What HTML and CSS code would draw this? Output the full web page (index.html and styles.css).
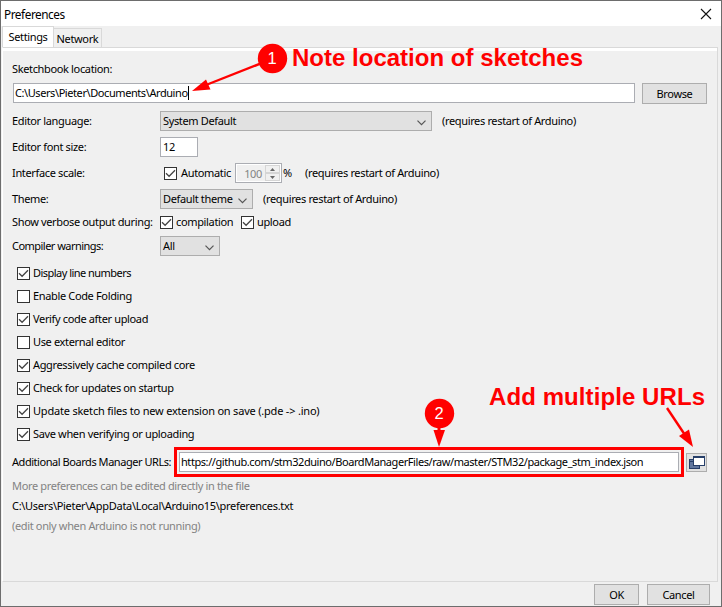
FILE: index.html
```
<!DOCTYPE html>
<html lang="en">
<head>
<meta charset="utf-8">
<title>Preferences</title>
<link rel="stylesheet" href="styles.css">
</head>
<body>
<svg class="defs" width="0" height="0">
  <symbol id="tick" viewBox="0 0 11 11"><path d="M1 5.2 4.1 8.3 10 2.3" fill="none" stroke="#444" stroke-width="1.25"/></symbol>
  <symbol id="chevron" viewBox="0 0 9 6"><path d="M.5.7 4.5 4.7 8.5.7" fill="none" stroke="#555" stroke-width="1.2"/></symbol>
</svg>
<div class="window">
  <header class="titlebar"><span class="title">Preferences</span>
    <svg class="close" width="12" height="12" viewBox="0 0 12 12"><path d="M1 1 11 11M11 1 1 11" stroke="#111" stroke-width="1.1"/></svg>
  </header>
  <nav class="tabs"><span class="tab active"><span class="t">Settings</span></span><span class="tab network"><span class="t">Network</span></span></nav>
  <main class="panel">
    <div class="row heading"><span class="t">Sketchbook location:</span></div>
    <div class="row location"><div class="field path"><span class="t w-path">C:\Users\Pieter\Documents\Arduino</span><i class="caret"></i></div><button class="browse"><span class="t">Browse</span></button></div>
    <div class="row language"><label><span class="t">Editor language:</span></label><div class="combo wide"><span class="t">System Default</span><svg width="9" height="6"><use href="#chevron"/></svg></div><span class="t note">(requires restart of Arduino)</span></div>
    <div class="row fontsize"><label><span class="t">Editor font size:</span></label><div class="field size"><span class="t">12</span></div></div>
    <div class="row scale"><label><span class="t">Interface scale:</span></label><i class="check auto"><svg width="11" height="11"><use href="#tick"/></svg></i><span class="t automatic">Automatic</span>
      <div class="spinner"><span class="t value">100</span><div class="steps"><i><svg width="5" height="3"><path d="M0 3 2.5 0 5 3z" fill="#666"/></svg></i><i><svg width="5" height="3"><path d="M0 0 2.5 3 5 0z" fill="#666"/></svg></i></div></div><span class="t percent">%</span><span class="t note">(requires restart of Arduino)</span></div>
    <div class="row theme"><label><span class="t">Theme:</span></label><div class="combo medium"><span class="t">Default theme</span><svg width="9" height="6"><use href="#chevron"/></svg></div><span class="t note">(requires restart of Arduino)</span></div>
    <div class="row verbose"><label><span class="t">Show verbose output during:</span></label><i class="check"><svg width="11" height="11"><use href="#tick"/></svg></i><span class="t compilation">compilation</span><i class="check"><svg width="11" height="11"><use href="#tick"/></svg></i><span class="t">upload</span></div>
    <div class="row warnings"><label><span class="t tight">Compiler warnings:</span></label><div class="combo small"><span class="t">All</span><svg width="9" height="6"><use href="#chevron"/></svg></div></div>
    <div class="options">
      <div class="option"><i class="check"><svg width="11" height="11"><use href="#tick"/></svg></i><span class="t tight">Display line numbers</span></div>
      <div class="option"><i class="check"></i><span class="t">Enable Code Folding</span></div>
      <div class="option"><i class="check"><svg width="11" height="11"><use href="#tick"/></svg></i><span class="t">Verify code after upload</span></div>
      <div class="option"><i class="check"></i><span class="t">Use external editor</span></div>
      <div class="option"><i class="check"><svg width="11" height="11"><use href="#tick"/></svg></i><span class="t">Aggressively cache compiled core</span></div>
      <div class="option"><i class="check"><svg width="11" height="11"><use href="#tick"/></svg></i><span class="t">Check for updates on startup</span></div>
      <div class="option"><i class="check"><svg width="11" height="11"><use href="#tick"/></svg></i><span class="t loose">Update sketch files to new extension on save (.pde -&gt; .ino)</span></div>
      <div class="option"><i class="check"><svg width="11" height="11"><use href="#tick"/></svg></i><span class="t">Save when verifying or uploading</span></div>
    </div>
    <div class="row urls"><label><span class="t w-urls">Additional Boards Manager URLs:</span></label><div class="highlight"><div class="field"><span class="t w-json">https://github.com/stm32duino/BoardManagerFiles/raw/master/STM32/package_stm_index.json</span></div></div>
      <button class="expand" aria-label="Edit URLs"><svg width="17" height="15" viewBox="0 0 17 15"><rect x="1.500" y="4.500" width="10" height="9" fill="#61779f" stroke="#263e69"/><path d="M1 6.5H5" stroke="#263e69"/><rect x="5.500" y="1.500" width="11" height="9" fill="#fff" stroke="#263e69"/><path d="M5 2H17" stroke="#263e69" stroke-width="2"/></svg></button></div>
    <div class="hint muted"><span class="t">More preferences can be edited directly in the file</span></div>
    <div class="hint"><span class="t w-file">C:\Users\Pieter\AppData\Local\Arduino15\preferences.txt</span></div>
    <div class="hint muted"><span class="t">(edit only when Arduino is not running)</span></div>
  </main>
  <footer><button class="ok"><span class="t">OK</span></button><button class="cancel"><span class="t">Cancel</span></button></footer>
</div>
<svg class="annotations" width="722" height="607" viewBox="0 0 722 607">
  <g fill="#f00" stroke="none">
    <path d="M272 59 206 85" stroke="#f00" stroke-width="2.4"/><path d="M192 91 206 79.500 210.500 89.500z"/>
    <circle cx="272.500" cy="58.500" r="14.700"/>
    <path d="M439 425V432" stroke="#f00" stroke-width="3"/><path d="M433.500 430H445L439 447z"/>
    <circle cx="439.500" cy="413.500" r="14.700"/>
    <path d="M667 408 685 435" stroke="#f00" stroke-width="2.400"/><path d="M693 447 679 436 689 429.500z"/>
  </g>
  <text class="badge" x="272" y="64">1</text>
  <text class="badge" x="439" y="419">2</text>
  <text class="callout" x="292" y="66" textLength="291">Note location of sketches</text>
  <text class="callout" x="489" y="405" textLength="216">Add multiple URLs</text>
</svg>
</body>
</html>
```
FILE: styles.css
```
* { box-sizing: border-box; }
body { margin: 0; background: #f0f0f0; color: #000; font: 11px/14px "Noto Sans", sans-serif; }
.defs { position: absolute; }
.window { width: 722px; height: 607px; border: 1px solid #6d6d6d; background: #f0f0f0; display: flex; flex-direction: column; }
.t { white-space: nowrap; letter-spacing: -.35px; }
.tight { letter-spacing: -.53px; }
.loose { letter-spacing: -.2px; }
i { display: block; flex: none; }
.titlebar { height: 25px; flex: none; background: #fff; display: flex; justify-content: space-between; align-items: center; padding: 0 9px 0 3px; font-size: 11.8px; }
.title { letter-spacing: -.45px; }
.tabs { height: 21px; flex: none; display: flex; align-items: flex-end; padding-left: 1px; }
.tab { display: flex; align-items: center; justify-content: center; border: 1px solid #d9d9d9; border-bottom: 0; }
.active { width: 52px; height: 21px; background: #fff; }
.network { width: 48px; height: 19px; border-left: 0; padding-top: 1px; }
.panel { height: 535px; margin: 0 3px 0 1px; border: 1px solid #d9d9d9; border-left-color: #fff; box-shadow: inset 0 3px #fff; padding: 11px 0 0 9px; flex: none; }
.row { display: flex; align-items: center; height: 20px; }
.row label { width: 148px; flex: none; }
.heading { height: 20px; }
.location { height: 22px; margin-top: 4px; align-items: flex-start; }
.field { height: 20px; border: 1px solid #abadb3; background: #fff; display: flex; align-items: center; padding-left: 2px; }
.path { width: 622px; margin: 0 7px 0 1px; padding-left: 1px; }
.w-path { letter-spacing: -.42px; }
.w-urls { letter-spacing: -.45px; }
.w-json { letter-spacing: -.43px; }
.w-file { letter-spacing: -.3px; }
.caret { width: 1px; height: 14px; background: #000; }
button { margin: 0; padding: 0; border: 1px solid #adadad; background: #e1e1e1; font: inherit; color: inherit; display: flex; align-items: center; justify-content: center; }
.browse { width: 65px; height: 21px; }
.language { margin-top: 6px; }
.combo { height: 20px; border: 1px solid #adadad; background: #e1e1e1; display: flex; align-items: center; justify-content: space-between; padding: 0 5px 0 2px; }
.combo svg { margin-top: 3px; flex: none; }
.wide { width: 272px; }
.medium { width: 93px; }
.small { width: 60px; }
.note { margin-left: 10px; }
.fontsize, .scale, .theme { margin-top: 6px; }
.size { width: 38px; }
.check { width: 13px; height: 13px; border: 1px solid #333; background: #fff; margin-right: 3px; }
.check svg { display: block; }
.auto { margin-left: 4px; }
.automatic { width: 54px; margin-left: 1px; }
.spinner { width: 47px; height: 20px; border: 1px solid #abadb3; background: #fff; display: flex; padding: 1px; }
.value { width: 28px; background: #f0f0f0; color: #838383; text-align: right; padding-right: 3px; line-height: 17px; }
.steps { width: 15px; height: 16px; display: flex; flex-direction: column; }
.steps i { height: 8px; border: 1px solid #d5d5d5; background: #f0f0f0; display: flex; align-items: center; justify-content: center; }
.percent { width: 12px; margin-left: 1px; }
.verbose { height: 14px; margin-top: 6px; }
.compilation { width: 65px; }
.warnings { margin-top: 7px; }
.options { padding: 6px 0 0 5px; }
.option { height: 23px; display: flex; align-items: center; }
.option .t { margin-top: -1px; }
.urls { height: 30px; margin-top: 1px; }
.urls label { width: 162px; }
.highlight { width: 510px; height: 30px; border: 3px solid #f00; padding: 2px; }
.highlight .field { padding-left: 1px; }
.expand { width: 21px; height: 19px; margin-left: 2px; }
.hint { height: 20px; display: flex; align-items: center; margin-top: -1px; }
.hint + .hint { margin-top: 0; }
.muted { color: #838383; }
footer { display: flex; justify-content: flex-end; gap: 8px; padding: 2px 11px 0 0; }
footer button { height: 21px; }
.ok { width: 45px; }
.cancel { width: 63px; }
.annotations { position: absolute; left: 0; top: 0; pointer-events: none; }
.badge { font: 16.5px "Liberation Sans", sans-serif; fill: #fff; text-anchor: middle; }
.callout { font: bold 24px "Liberation Sans", sans-serif; fill: #f00; }
```
